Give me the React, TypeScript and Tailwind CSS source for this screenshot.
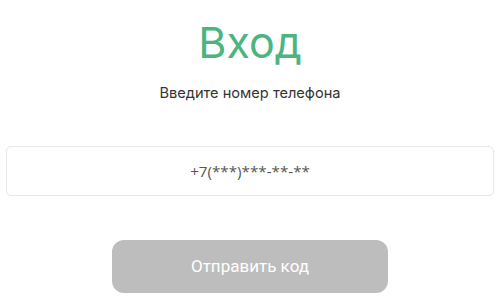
import React from "react";

export default function App() {
  return (
    <div className="w-[500px] h-[301px] bg-white flex flex-col items-center overflow-hidden" style={{ fontFamily: "Inter, 'Noto Sans', sans-serif" }}>
      <h1 className="mt-[14px] text-[43px] leading-[56px] text-[#4cb47e] font-normal">Вход</h1>
      <p className="mt-[14px] text-[14.6px] leading-[18px] text-[#333333]">Введите номер телефона</p>
      <div className="mt-[44px] w-[488px] h-[50px] border border-[#e6e6e6] rounded-[5px] flex items-center justify-center">
        <span className="text-[15.2px] text-[#555555]" style={{ fontFamily: "'Open Sans', sans-serif" }}>+7(***)***-**-**</span>
      </div>
      <button className="mt-[44px] w-[276px] h-[53px] bg-[#bdbdbd] rounded-[12px] text-white text-[17px]" style={{ fontFamily: "Roboto, Arial, sans-serif" }}>Отправить код</button>
    </div>
  );
}
